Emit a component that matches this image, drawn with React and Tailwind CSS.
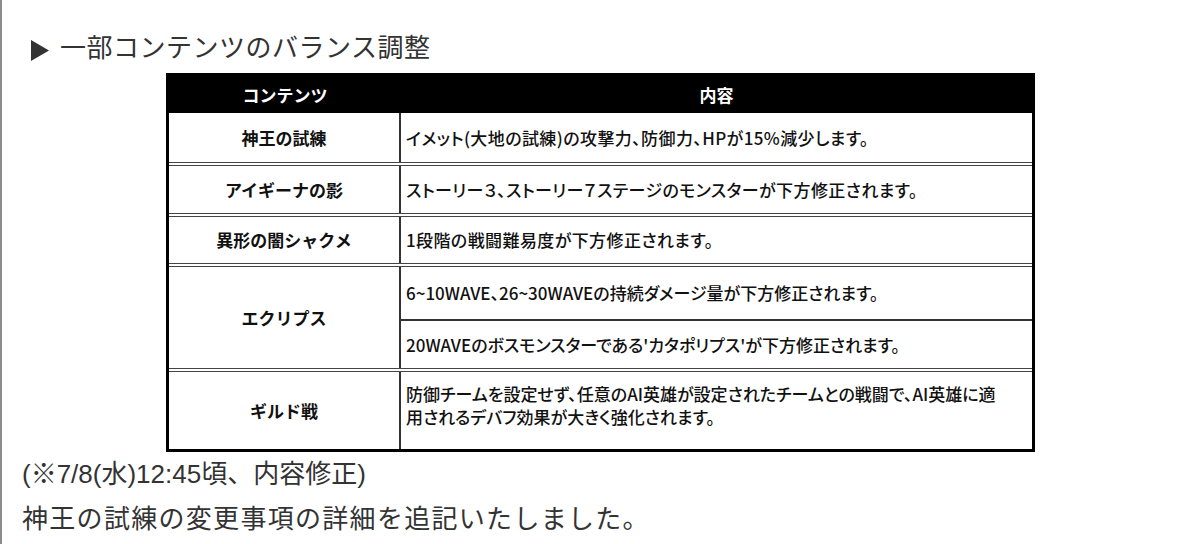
import React from 'react';

const rows = [
  { name: '神王の試練', h: 'h-[49px]', first: true, text: 'イメット(大地の試練)の攻撃力、防御力、HPが15%減少します。' },
  { name: 'アイギーナの影', h: 'h-[51px]', text: 'ストーリー３、ストーリー７ステージのモンスターが下方修正されます。' },
  { name: '異形の闇シャクメ', h: 'h-[50px]', text: '1段階の戦闘難易度が下方修正されます。' },
];

function Cell({ children, className = '' }) {
  return (
    <div className={`flex items-center pl-[5px] whitespace-nowrap font-medium [font-feature-settings:'palt'] ${className}`}>
      {children}
    </div>
  );
}

function NameCell({ children }) {
  return (
    <div className="flex items-center justify-center font-bold border-r-2 border-[#333]">{children}</div>
  );
}

export default function App() {
  return (
    <div className="w-[1200px] h-[544px] bg-white border-l-2 border-[#8c8c8c] overflow-hidden pt-[30px] font-['Liberation_Sans','Noto_Sans_CJK_JP',sans-serif] text-[#333]">
      {/* Title */}
      <div className="flex items-center h-[36px] pl-[29px]">
        <svg width="18" height="21" viewBox="0 0 18 21" className="mt-[4px]">
          <polygon points="0,0 18,10.5 0,21" fill="#333" />
        </svg>
        <span className="ml-[11px] text-[26px] leading-[36px] tracking-[0.5px]">一部コンテンツのバランス調整</span>
      </div>

      {/* Table */}
      <div className="mt-[7px] ml-[164px] w-[869px] border-[3px] border-black text-[#111] text-[17px] font-['Noto_Sans_CJK_JP',sans-serif]">
        <div className="grid grid-cols-[232px_1fr] h-[37px] bg-black text-white font-bold items-center">
          <div className="text-center">コンテンツ</div>
          <div className="text-center">内容</div>
        </div>

        {rows.map((r) => (
          <div
            key={r.name}
            className={`grid grid-cols-[232px_1fr] ${r.h} ${r.first ? '' : 'border-t-4 border-double border-[#444]'}`}
          >
            <NameCell>{r.name}</NameCell>
            <Cell className="tracking-[0.4px]">{r.text}</Cell>
          </div>
        ))}

        {/* Eclipse */}
        <div className="grid grid-cols-[232px_1fr] h-[105px] border-t-4 border-double border-[#444]">
          <NameCell>エクリプス</NameCell>
          <div className="grid grid-rows-[52px_1fr]">
            <Cell>6~10WAVE、26~30WAVEの持続ダメージ量が下方修正されます。</Cell>
            <Cell className="border-t-2 border-[#333]">
              20WAVEのボスモンスターである'カタポリプス'が下方修正されます。
            </Cell>
          </div>
        </div>

        {/* Guild */}
        <div className="grid grid-cols-[232px_1fr] h-[81px] border-t-4 border-double border-[#444]">
          <NameCell>ギルド戦</NameCell>
          <div className="pl-[5px] pt-[10px] leading-[23px] whitespace-nowrap font-medium [font-feature-settings:'palt']">
            防御チームを設定せず、任意のAI英雄が設定されたチームとの戦闘で、AI英雄に適
            <br />
            用されるデバフ効果が大きく強化されます。
          </div>
        </div>
      </div>

      {/* Notes */}
      <div className="pl-[20px] text-[26px] leading-[45px]">
        <p>(※7/8(水)12:45頃、内容修正)</p>
        <p className="tracking-[1.3px]">神王の試練の変更事項の詳細を追記いたしました。</p>
      </div>
    </div>
  );
}
